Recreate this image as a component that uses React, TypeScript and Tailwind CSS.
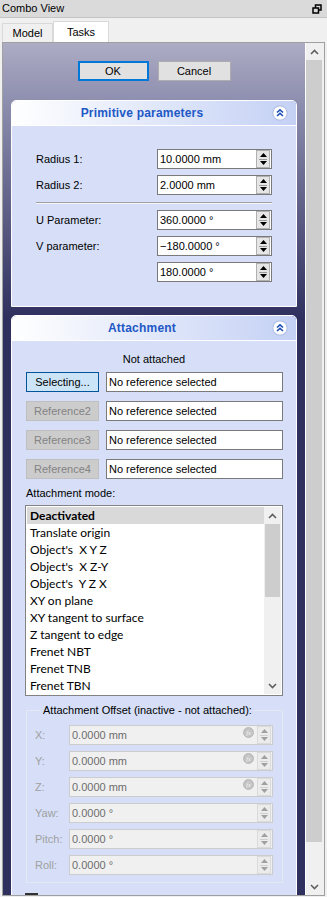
import React from "react";

const Tri = ({ up, color }: { up: boolean; color: string }) => (
  <svg width="7" height="4" viewBox="0 0 7 4">
    <path d={up ? "M3.5 0 L7 4 L0 4 Z" : "M0 0 L7 0 L3.5 4 Z"} fill={color} />
  </svg>
);

const SpinArrows = ({ disabled = false }: { disabled?: boolean }) => (
  <div
    className={
      disabled
        ? "flex flex-col w-[14px] h-[18px] border border-[#dadada] bg-[#ececec]"
        : "flex flex-col w-[14px] h-[18px] border border-[#b0b0b0] bg-[#e6e6e6]"
    }
  >
    <div className="flex-1 flex items-center justify-center">
      <Tri up color={disabled ? "#a0a0a0" : "#000"} />
    </div>
    <div className={disabled ? "h-px mx-[2px] bg-[#cfcfcf]" : "h-px mx-[2px] bg-[#9a9a9a]"} />
    <div className="flex-1 flex items-center justify-center">
      <Tri up={false} color={disabled ? "#a0a0a0" : "#000"} />
    </div>
  </div>
);

const ExprIcon = () => (
  <svg width="11" height="11" viewBox="0 0 11 11" className="self-start mt-[1px] mr-[3px]">
    <circle cx="5.5" cy="5.5" r="5" fill="#c4c4c4" stroke="#b0b0b0" strokeWidth="0.8" />
    <text x="5.5" y="8" textAnchor="middle" fontSize="6.5" fontStyle="italic" fill="#f4f4f4" fontFamily="Liberation Serif, serif">
      fx
    </text>
  </svg>
);

const SpinInput = ({ value, disabled = false, expr = false }: { value: string; disabled?: boolean; expr?: boolean }) => (
  <div
    className={
      disabled
        ? "w-full h-[20px] border border-[#cccccc] bg-[#f0f0f0] text-[#6d6d6d] flex items-center pl-[2px] pr-[1px]"
        : "w-full h-[20px] border border-[#7a7a7a] bg-white text-black flex items-center pl-[2px] pr-[1px]"
    }
  >
    <span className="flex-1 leading-none whitespace-pre">{value}</span>
    {expr && <ExprIcon />}
    <SpinArrows disabled={disabled} />
  </div>
);

const CollapseBtn = () => (
  <svg width="16" height="16" viewBox="0 0 16 16">
    <circle cx="8" cy="8" r="7.2" fill="#ffffff" stroke="#b4c2e6" strokeWidth="1.2" />
    <path d="M5 7.5 L8 4.8 L11 7.5 M5 11 L8 8.3 L11 11" fill="none" stroke="#1f4fb8" strokeWidth="1.6" />
  </svg>
);

const TaskBox = ({ title, children }: { title: string; children: React.ReactNode }) => (
  <div className="border border-white rounded-t-[5px] overflow-hidden">
    <div className="h-[25px] border-b border-white bg-[linear-gradient(to_right,#ffffff_0%,#e4eafa_45%,#c4d1f5_100%)] flex items-center">
      <div className="flex-1 text-center font-bold text-[12px] text-[#2158c6] tracking-[0.2px]">{title}</div>
      <div className="w-[24px] flex items-center justify-start">
        <CollapseBtn />
      </div>
    </div>
    <div className="bg-[#d6dff7]">{children}</div>
  </div>
);

const Chevron = ({ up }: { up: boolean }) => (
  <svg width="9" height="6" viewBox="0 0 9 6">
    <path d={up ? "M1 5 L4.5 1.5 L8 5" : "M1 1 L4.5 4.5 L8 1"} fill="none" stroke="#606060" strokeWidth="1.6" />
  </svg>
);

const listItems = [
  "Translate origin",
  "Object's  X Y Z",
  "Object's  X Z-Y",
  "Object's  Y Z X",
  "XY on plane",
  "XY tangent to surface",
  "Z tangent to edge",
  "Frenet NBT",
  "Frenet TNB",
  "Frenet TBN",
];

const RefRow = ({ label, active = false }: { label: string; active?: boolean }) => (
  <div className="flex gap-[7px] h-[20px]">
    <div
      className={
        active
          ? "ml-[1px] w-[73px] h-[20px] border border-[#005499] bg-[#cce4f7] flex items-center justify-center text-black"
          : "ml-[1px] w-[73px] h-[20px] border border-[#bfbfbf] bg-[#cccccc] flex items-center justify-center text-[#838383]"
      }
    >
      {label}
    </div>
    <div className="flex-1 h-[20px] border border-[#7a7a7a] bg-white flex items-center pl-[2px]">No reference selected</div>
  </div>
);

const ParamRow = ({ label, value }: { label: string; value: string }) => (
  <div className="flex items-center justify-between h-[20px]">
    <span>{label}</span>
    <div className="w-[115px]">
      <SpinInput value={value} />
    </div>
  </div>
);

const OffsetRow = ({ label, value, expr = false }: { label: string; value: string; expr?: boolean }) => (
  <div className="flex items-center h-[20px]">
    <span className="w-[34px] text-[#a0a0a0]">{label}</span>
    <div className="flex-1">
      <SpinInput value={value} disabled expr={expr} />
    </div>
  </div>
);

export default function App() {
  return (
    <div className="w-[327px] h-[897px] overflow-hidden bg-[#f0f0f0] text-[11px] text-black font-['Liberation_Sans',Arial,sans-serif] flex flex-col">
      {/* Title bar */}
      <div className="h-[18px] shrink-0 bg-[#dadada] border-b border-[#c4c4c4] flex items-center justify-between pl-[2px] pr-[5px]">
        <span className="leading-none">Combo View</span>
        <svg width="10" height="10" viewBox="0 0 10 10">
          <rect x="3.5" y="1" width="5.5" height="5" fill="none" stroke="#000" strokeWidth="1.5" />
          <rect x="1" y="4" width="5.5" height="5" fill="#dadada" stroke="#000" strokeWidth="1.5" />
        </svg>
      </div>
      {/* Tabs */}
      <div className="h-[24px] shrink-0 flex items-end pl-[2px]">
        <div className="h-[19px] w-[51px] border border-b-0 border-[#d9d9d9] bg-[#f0f0f0] flex items-center justify-center pt-[1px]">
          Model
        </div>
        <div className="h-[21px] w-[56px] border border-b-0 border-[#d9d9d9] bg-white flex items-center justify-center">
          Tasks
        </div>
      </div>
      {/* Panel */}
      <div className="mx-[2px] h-[854px] shrink-0 border border-[#a0a0a0] flex overflow-hidden">
        <div className="w-[302px] h-full overflow-hidden bg-[linear-gradient(to_bottom,#acacc5_0px,#8d8dae_60px,#30305f_275px,#30305f_100%)] px-[8px] pt-[18px]">
          <div className="flex justify-center gap-[9px]">
            <div className="w-[71px] h-[20px] border-2 border-[#0078d7] bg-[#e1e1e1] flex items-center justify-center">OK</div>
            <div className="w-[73px] h-[20px] border border-[#adadad] bg-[#e1e1e1] flex items-center justify-center">Cancel</div>
          </div>

          <div className="mt-[19px]">
            <TaskBox title="Primitive parameters">
              <div className="pt-[23px] pb-[24px] pl-[24px] pr-[24px]">
                <div className="flex flex-col gap-[6px]">
                  <ParamRow label="Radius 1:" value="10.0000 mm" />
                  <ParamRow label="Radius 2:" value="2.0000 mm" />
                </div>
                <div className="mt-[7px] mb-[6px] h-[2px] border-t border-[#a0a0a0] border-b border-b-[#f4f6fc]" />
                <div className="flex flex-col gap-[6px]">
                  <ParamRow label="U Parameter:" value="360.0000 °" />
                  <ParamRow label="V parameter:" value="−180.0000 °" />
                  <ParamRow label="" value="180.0000 °" />
                </div>
              </div>
            </TaskBox>
          </div>

          <div className="mt-[8px]">
            <TaskBox title="Attachment">
              <div className="px-[13px] pt-[11px] pb-[20px]">
                <div className="text-center leading-[14px]">Not attached</div>
                <div className="mt-[6px] flex flex-col gap-[9px]">
                  <RefRow label="Selecting..." active />
                  <RefRow label="Reference2" />
                  <RefRow label="Reference3" />
                  <RefRow label="Reference4" />
                </div>
                <div className="mt-[7px] leading-[14px] ml-[1px]">Attachment mode:</div>
                <div className="mt-[5px] h-[191px] border border-[#828282] bg-white p-[1px] flex font-['Lato',sans-serif] text-[12px]">
                  <div className="flex-1 flex flex-col">
                    <div className="h-[17px] leading-[17px] pl-[3px] bg-[#d9d9d9] font-bold">Deactivated</div>
                    {listItems.map((t) => (
                      <div key={t} className="h-[17px] leading-[17px] pl-[3px] whitespace-pre">
                        {t}
                      </div>
                    ))}
                  </div>
                  <div className="w-[17px] bg-[#f0f0f0] flex flex-col">
                    <div className="h-[17px] flex items-center justify-center">
                      <Chevron up />
                    </div>
                    <div className="h-[73px] bg-[#cdcdcd] mx-[1px]" />
                    <div className="flex-1" />
                    <div className="h-[17px] flex items-center justify-center">
                      <Chevron up={false} />
                    </div>
                  </div>
                </div>
                <fieldset className="mt-[7px] ml-[1px] border border-[#e4e8f2] pl-[8px] pr-[9px] pb-[7px]">
                  <legend className="ml-[6px] px-[2px] leading-[14px]">Attachment Offset (inactive - not attached):</legend>
                  <div className="pt-[8px] flex flex-col gap-[6px]">
                    <OffsetRow label="X:" value="0.0000 mm" expr />
                    <OffsetRow label="Y:" value="0.0000 mm" expr />
                    <OffsetRow label="Z:" value="0.0000 mm" expr />
                    <OffsetRow label="Yaw:" value="0.0000 °" />
                    <OffsetRow label="Pitch:" value="0.0000 °" />
                    <OffsetRow label="Roll:" value="0.0000 °" />
                  </div>
                </fieldset>
                <div className="mt-[10px] w-[13px] h-[13px] border-t-2 border-[#333333]" />
              </div>
            </TaskBox>
          </div>
        </div>
        <div className="w-[17px] h-full border-l border-white bg-[#f0f0f0] flex flex-col">
          <div className="h-[17px] flex items-center justify-center">
            <Chevron up />
          </div>
          <div className="h-[782px] bg-[#cdcdcd]" />
          <div className="flex-1" />
          <div className="h-[17px] flex items-center justify-center">
            <Chevron up={false} />
          </div>
        </div>
      </div>
    </div>
  );
}
